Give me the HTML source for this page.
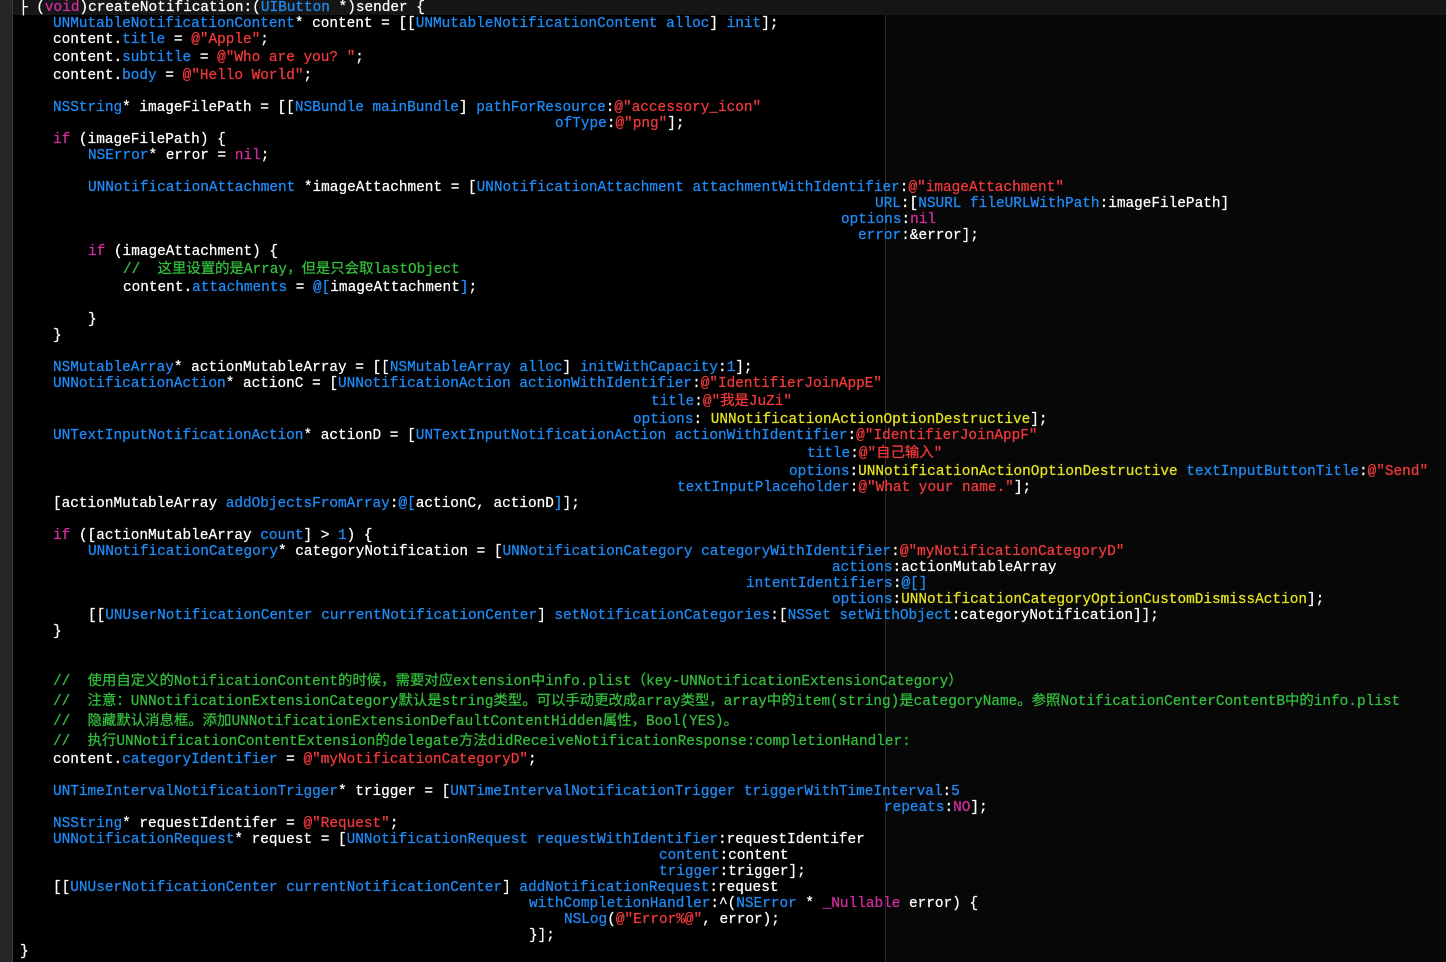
<!DOCTYPE html>
<html><head><meta charset="utf-8"><style>
html,body{margin:0;padding:0;background:#000;width:1446px;height:962px;overflow:hidden;position:relative}
#c{position:absolute;left:0;top:2px;width:1446px;height:960px}
.l{position:absolute;white-space:pre;font-family:"Liberation Mono","Noto Sans CJK SC",monospace;font-size:14.4px;line-height:18px;color:#fff;-webkit-text-stroke:0.25px currentColor}
.b{color:#1e8cf8}.r{color:#f2393b}.m{color:#d52ca3}.g{color:#33bf3c}.y{color:#e6e31f}
#gut{position:absolute;left:0;top:0;width:12px;height:962px;background:#262626}
#gut2{position:absolute;left:12px;top:0;width:1px;height:962px;background:#3a3a3a}
#guide{position:absolute;left:885px;top:0;width:1px;height:962px;background:#2a2a2a}
#rt{position:absolute;left:886px;top:0;width:560px;height:962px;background:#070707}
#hl{position:absolute;left:13px;top:0;width:1433px;height:15px;background:#161616}
</style></head><body>
<div id="rt"></div><div id="guide"></div><div id="hl"></div><div id="gut"></div><div id="gut2"></div>
<div id="c">
<div class="l" style="top:-3px;left:19px">├ (<span class="m">void</span>)createNotification:(<span class="b">UIButton</span> *)sender {</div>
<div class="l" style="top:13px;left:53px"><span class="b">UNMutableNotificationContent</span>* content = [[<span class="b">UNMutableNotificationContent</span> <span class="b">alloc</span>] <span class="b">init</span>];</div>
<div class="l" style="top:29px;left:53px">content.<span class="b">title</span> = <span class="r">@"Apple"</span>;</div>
<div class="l" style="top:47px;left:53px">content.<span class="b">subtitle</span> = <span class="r">@"Who are you? "</span>;</div>
<div class="l" style="top:65px;left:53px">content.<span class="b">body</span> = <span class="r">@"Hello World"</span>;</div>
<div class="l" style="top:97px;left:53px"><span class="b">NSString</span>* imageFilePath = [[<span class="b">NSBundle</span> <span class="b">mainBundle</span>] <span class="b">pathForResource</span>:<span class="r">@"accessory_icon"</span></div>
<div class="l" style="top:113px;left:555px"><span class="b">ofType</span>:<span class="r">@"png"</span>];</div>
<div class="l" style="top:129px;left:53px"><span class="m">if</span> (imageFilePath) {</div>
<div class="l" style="top:145px;left:88px"><span class="b">NSError</span>* error = <span class="m">nil</span>;</div>
<div class="l" style="top:177px;left:88px"><span class="b">UNNotificationAttachment</span> *imageAttachment = [<span class="b">UNNotificationAttachment</span> <span class="b">attachmentWithIdentifier</span>:<span class="r">@"imageAttachment"</span></div>
<div class="l" style="top:193px;left:875px"><span class="b">URL</span>:[<span class="b">NSURL</span> <span class="b">fileURLWithPath</span>:imageFilePath]</div>
<div class="l" style="top:209px;left:841px"><span class="b">options</span>:<span class="m">nil</span></div>
<div class="l" style="top:225px;left:858px"><span class="b">error</span>:&amp;error];</div>
<div class="l" style="top:241px;left:88px"><span class="m">if</span> (imageAttachment) {</div>
<div class="l g" style="top:259px;left:123px">//  这里设置的是Array，但是只会取lastObject</div>
<div class="l" style="top:277px;left:123px">content.<span class="b">attachments</span> = <span class="b">@[</span>imageAttachment<span class="b">]</span>;</div>
<div class="l" style="top:309px;left:88px">}</div>
<div class="l" style="top:325px;left:53px">}</div>
<div class="l" style="top:357px;left:53px"><span class="b">NSMutableArray</span>* actionMutableArray = [[<span class="b">NSMutableArray</span> <span class="b">alloc</span>] <span class="b">initWithCapacity</span>:<span class="b">1</span>];</div>
<div class="l" style="top:373px;left:53px"><span class="b">UNNotificationAction</span>* actionC = [<span class="b">UNNotificationAction</span> <span class="b">actionWithIdentifier</span>:<span class="r">@"IdentifierJoinAppE"</span></div>
<div class="l" style="top:391px;left:651px"><span class="b">title</span>:<span class="r">@"我是JuZi"</span></div>
<div class="l" style="top:409px;left:633px"><span class="b">options</span>: <span class="y">UNNotificationActionOptionDestructive</span>];</div>
<div class="l" style="top:425px;left:53px"><span class="b">UNTextInputNotificationAction</span>* actionD = [<span class="b">UNTextInputNotificationAction</span> <span class="b">actionWithIdentifier</span>:<span class="r">@"IdentifierJoinAppF"</span></div>
<div class="l" style="top:443px;left:807px"><span class="b">title</span>:<span class="r">@"自己输入"</span></div>
<div class="l" style="top:461px;left:789px"><span class="b">options</span>:<span class="y">UNNotificationActionOptionDestructive</span> <span class="b">textInputButtonTitle</span>:<span class="r">@"Send"</span></div>
<div class="l" style="top:477px;left:677px"><span class="b">textInputPlaceholder</span>:<span class="r">@"What your name."</span>];</div>
<div class="l" style="top:493px;left:53px">[actionMutableArray <span class="b">addObjectsFromArray</span>:<span class="b">@[</span>actionC, actionD<span class="b">]</span>];</div>
<div class="l" style="top:525px;left:53px"><span class="m">if</span> ([actionMutableArray <span class="b">count</span>] &gt; <span class="b">1</span>) {</div>
<div class="l" style="top:541px;left:88px"><span class="b">UNNotificationCategory</span>* categoryNotification = [<span class="b">UNNotificationCategory</span> <span class="b">categoryWithIdentifier</span>:<span class="r">@"myNotificationCategoryD"</span></div>
<div class="l" style="top:557px;left:832px"><span class="b">actions</span>:actionMutableArray</div>
<div class="l" style="top:573px;left:746px"><span class="b">intentIdentifiers</span>:<span class="b">@[]</span></div>
<div class="l" style="top:589px;left:832px"><span class="b">options</span>:<span class="y">UNNotificationCategoryOptionCustomDismissAction</span>];</div>
<div class="l" style="top:605px;left:88px">[[<span class="b">UNUserNotificationCenter</span> <span class="b">currentNotificationCenter</span>] <span class="b">setNotificationCategories</span>:[<span class="b">NSSet</span> <span class="b">setWithObject</span>:categoryNotification]];</div>
<div class="l" style="top:621px;left:53px">}</div>
<div class="l g" style="top:671px;left:53px">//  使用自定义的NotificationContent的时候，需要对应extension中info.plist（key-UNNotificationExtensionCategory）</div>
<div class="l g" style="top:691px;left:53px">//  注意：UNNotificationExtensionCategory默认是string类型。可以手动更改成array类型，array中的item(string)是categoryName。参照NotificationCenterContentB中的info.plist</div>
<div class="l g" style="top:711px;left:53px">//  隐藏默认消息框。添加UNNotificationExtensionDefaultContentHidden属性，Bool(YES)。</div>
<div class="l g" style="top:731px;left:53px">//  执行UNNotificationContentExtension的delegate方法didReceiveNotificationResponse:completionHandler:</div>
<div class="l" style="top:749px;left:53px">content.<span class="b">categoryIdentifier</span> = <span class="r">@"myNotificationCategoryD"</span>;</div>
<div class="l" style="top:781px;left:53px"><span class="b">UNTimeIntervalNotificationTrigger</span>* trigger = [<span class="b">UNTimeIntervalNotificationTrigger</span> <span class="b">triggerWithTimeInterval</span>:<span class="b">5</span></div>
<div class="l" style="top:797px;left:884px"><span class="b">repeats</span>:<span class="m">NO</span>];</div>
<div class="l" style="top:813px;left:53px"><span class="b">NSString</span>* requestIdentifer = <span class="r">@"Request"</span>;</div>
<div class="l" style="top:829px;left:53px"><span class="b">UNNotificationRequest</span>* request = [<span class="b">UNNotificationRequest</span> <span class="b">requestWithIdentifier</span>:requestIdentifer</div>
<div class="l" style="top:845px;left:659px"><span class="b">content</span>:content</div>
<div class="l" style="top:861px;left:659px"><span class="b">trigger</span>:trigger];</div>
<div class="l" style="top:877px;left:53px">[[<span class="b">UNUserNotificationCenter</span> <span class="b">currentNotificationCenter</span>] <span class="b">addNotificationRequest</span>:request</div>
<div class="l" style="top:893px;left:529px"><span class="b">withCompletionHandler</span>:^(<span class="b">NSError</span> * <span class="m">_Nullable</span> error) {</div>
<div class="l" style="top:909px;left:564px"><span class="b">NSLog</span>(<span class="r">@"Error%@"</span>, error);</div>
<div class="l" style="top:925px;left:529px">}];</div>
<div class="l" style="top:941px;left:20px">}</div>
</div>
</body></html>
